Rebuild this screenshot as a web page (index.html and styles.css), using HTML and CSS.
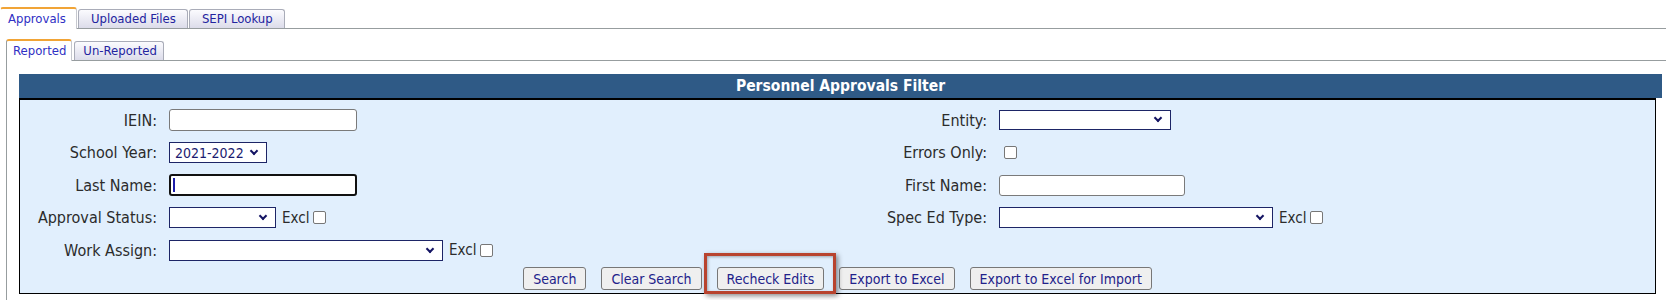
FILE: index.html
```html
<!DOCTYPE html>
<html lang="en">
<head>
    <meta charset="UTF-8">
    <title>Personnel Approvals</title>
    <link rel="stylesheet" href="styles.css">
</head>
<body>
    <!-- Top level tabs -->
    <div class="tabs tabs-main">
        <a class="tab active">Approvals</a>
        <a class="tab">Uploaded Files</a>
        <a class="tab">SEPI Lookup</a>
    </div>

    <div class="tab-body">
        <div class="tabs tabs-sub">
            <a class="tab active">Reported</a>
            <a class="tab">Un-Reported</a>
        </div>

        <div class="sub-body">
            <div class="filter">
                <div class="filter-title">Personnel Approvals Filter</div>
                <div class="filter-panel">
                    <div class="filter-grid">
                        <label class="field-label">IEIN:</label>
                        <div class="field"><input type="text" class="text-input"></div>
                        <label class="field-label">Entity:</label>
                        <div class="field"><span class="select-wrap"><select class="w-entity"><option></option></select></span></div>

                        <label class="field-label">School Year:</label>
                        <div class="field"><span class="select-wrap"><select class="w-year"><option>2021-2022</option></select></span></div>
                        <label class="field-label">Errors Only:</label>
                        <div class="field"><input type="checkbox" class="check check-solo"></div>

                        <label class="field-label">Last Name:</label>
                        <div class="field"><span class="focus-wrap"><input type="text" class="text-input is-focused"><span class="caret"></span></span></div>
                        <label class="field-label">First Name:</label>
                        <div class="field"><input type="text" class="text-input w-first"></div>

                        <label class="field-label">Approval Status:</label>
                        <div class="field"><span class="select-wrap"><select class="w-status"><option></option></select></span><span class="excl">Excl</span><input type="checkbox" class="check"></div>
                        <label class="field-label">Spec Ed Type:</label>
                        <div class="field"><span class="select-wrap"><select class="w-wide"><option></option></select></span><span class="excl">Excl</span><input type="checkbox" class="check"></div>

                        <label class="field-label">Work Assign:</label>
                        <div class="field"><span class="select-wrap"><select class="w-wide"><option></option></select></span><span class="excl">Excl</span><input type="checkbox" class="check"></div>
                        <div></div>
                        <div></div>
                    </div>

                    <div class="filter-actions">
                        <button class="btn">Search</button>
                        <button class="btn">Clear Search</button>
                        <span class="highlight"><button class="btn">Recheck Edits</button></span>
                        <button class="btn">Export to Excel</button>
                        <button class="btn">Export to Excel for Import</button>
                    </div>
                </div>
            </div>
        </div>
    </div>
</body>
</html>
```

FILE: styles.css
```css
/* Base */
* {
    margin: 0;
    padding: 0;
    box-sizing: border-box;
}

body {
    font-family: "DejaVu Sans Condensed", "DejaVu Sans", sans-serif;
    font-stretch: condensed;
    background-color: #fff;
    color: #2b2b2b;
    overflow: hidden;
}

/* Tabs */
.tabs {
    display: flex;
    align-items: flex-end;
    border-bottom: 1px solid #979d9f;
}

.tabs-main {
    padding-top: 7px;
    height: 29px;
}

.tabs-sub {
    margin: 10px 0 0 6px;
    height: 22px;
}

.tab {
    display: block;
    height: 19px;
    line-height: 18px;
    padding: 0 11px 0 12px;
    font-size: 13px;
    color: #23239f;
    border: 1px solid #a9acb8;
    border-bottom: none;
    border-radius: 3px 3px 0 0;
    background: linear-gradient(#fbfbfe, #dcdcea);
    margin-right: 1px;
}

.tab.active {
    height: 22px;
    line-height: 19px;
    margin-bottom: -1px;
    padding: 0 10px 0 7px;
    color: #3030c4;
    background: #fff;
    border-color: #c6c8cf;
    border-top: 2px solid #f1a436;
}

.tabs-main .tab.active {
    border-left-color: #fff;
}

.tabs-sub .tab {
    padding: 0 6px 0 8px;
}

.tabs-sub .tab.active {
    border-left-color: #979d9f;
    padding: 0 5px 0 6px;
    margin-right: 2px;
}

/* Sub panel */
.sub-body {
    margin-left: 6px;
    border-left: 1px solid #979d9f;
    padding: 13px 4px 20px 12px;
}

/* Filter box */
.filter-title {
    height: 24px;
    line-height: 24px;
    background-color: #2f5a86;
    color: #fff;
    font-size: 15.5px;
    font-weight: bold;
    text-align: center;
}

.filter-panel {
    margin-right: 6px;
    background-color: #e1effd;
    border: 1px solid #000;
    border-top-width: 2px;
    padding: 4px 0 3px;
}

.filter-grid {
    display: grid;
    grid-template-columns: 149px 668px 162px 1fr;
    grid-auto-rows: 32.5px;
    align-items: center;
}

.field-label {
    font-size: 16px;
    text-align: right;
    padding-right: 12px;
    color: #2b2b2b;
}

.field {
    display: flex;
    align-items: center;
}

/* Controls */
.text-input {
    width: 188px;
    height: 22px;
    border: 1px solid #7a7a7a;
    border-radius: 3px;
    background: #fff;
    font-family: inherit;
    font-size: 14px;
}

.text-input.w-first {
    width: 186px;
    height: 21px;
}

.focus-wrap {
    position: relative;
    display: inline-block;
}

.text-input.is-focused {
    border: 2px solid #111;
    outline: none;
}

.caret {
    position: absolute;
    left: 4px;
    top: 4px;
    width: 2px;
    height: 14px;
    background: #1d1da8;
}

.select-wrap {
    position: relative;
    display: inline-block;
}

.select-wrap::after {
    content: "";
    position: absolute;
    right: 10px;
    top: 6px;
    width: 4px;
    height: 4px;
    border-right: 2px solid #141463;
    border-bottom: 2px solid #141463;
    transform: rotate(45deg);
    pointer-events: none;
}

select {
    appearance: none;
    -webkit-appearance: none;
    display: block;
    height: 21px;
    border: 1px solid #1d2566;
    border-radius: 0;
    background: #fff;
    color: #1a1a70;
    font-family: inherit;
    font-stretch: condensed;
    font-size: 14px;
    padding: 0 20px 0 5px;
}

.w-year { width: 98px; }
.w-entity { width: 172px; height: 20px; }
.w-status { width: 107px; }
.w-wide { width: 274px; }

.select-wrap:has(.w-entity)::after {
    top: 5px;
}

.excl {
    font-size: 15px;
    margin-left: 6px;
    color: #2b2b2b;
}

.check {
    appearance: none;
    -webkit-appearance: none;
    width: 13px;
    height: 13px;
    border: 1px solid #777;
    border-radius: 2px;
    background: #fff;
    margin-left: 4px;
}

.check-solo {
    margin-left: 5px;
}

/* Buttons */
.filter-actions {
    display: flex;
    justify-content: center;
    gap: 15px;
    margin-top: 0.5px;
}

.btn {
    height: 23px;
    padding: 0 9px;
    border: 1px solid #777;
    border-radius: 3px;
    background-color: #efefef;
    color: #22228a;
    font-family: inherit;
    font-stretch: condensed;
    font-size: 14px;
    cursor: pointer;
}

.highlight {
    position: relative;
    display: inline-block;
}

.highlight::after {
    content: "";
    position: absolute;
    left: -13px;
    right: -12px;
    top: -14px;
    bottom: -4px;
    border: 3px solid #b8432e;
    box-shadow: 2px 2px 5px rgba(0, 0, 0, 0.45), inset 1px 1px 3px rgba(0, 0, 0, 0.3);
    pointer-events: none;
}
```
